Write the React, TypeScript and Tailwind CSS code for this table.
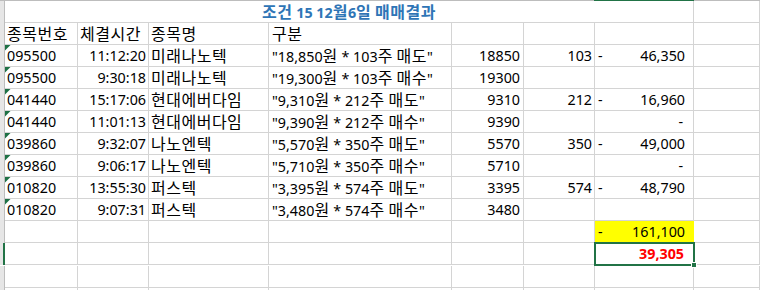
import type { ReactNode } from 'react';

type Row = {
  code: string;
  time: string;
  name: string;
  desc: string;
  price: string;
  qty: string;
  amount: string;
};

const rows: Row[] = [
  { code: '095500', time: '11:12:20', name: '미래나노텍', desc: '"18,850원 * 103주 매도"', price: '18850', qty: '103', amount: '46,350' },
  { code: '095500', time: '9:30:18', name: '미래나노텍', desc: '"19,300원 * 103주 매수"', price: '19300', qty: '', amount: '' },
  { code: '041440', time: '15:17:06', name: '현대에버다임', desc: '"9,310원 * 212주 매도"', price: '9310', qty: '212', amount: '16,960' },
  { code: '041440', time: '11:01:13', name: '현대에버다임', desc: '"9,390원 * 212주 매수"', price: '9390', qty: '', amount: '0' },
  { code: '039860', time: '9:32:07', name: '나노엔텍', desc: '"5,570원 * 350주 매도"', price: '5570', qty: '350', amount: '49,000' },
  { code: '039860', time: '9:06:17', name: '나노엔텍', desc: '"5,710원 * 350주 매수"', price: '5710', qty: '', amount: '0' },
  { code: '010820', time: '13:55:30', name: '퍼스텍', desc: '"3,395원 * 574주 매도"', price: '3395', qty: '574', amount: '48,790' },
  { code: '010820', time: '9:07:31', name: '퍼스텍', desc: '"3,480원 * 574주 매수"', price: '3480', qty: '', amount: '' },
];

const grid = 'grid grid-cols-[73px_71px_120px_183px_72px_71px_99px_1fr]';
const cell = 'relative h-[22px] border-r border-b border-[#d4d4d4] whitespace-nowrap overflow-visible leading-[20px] pt-[1px]';

// Malgun Gothic draws hangul a bit wider than its latin, so bump hangul runs
function Ko({ text }: { text: string }) {
  const parts = text.split(/([\uAC00-\uD7A3]+)/);
  return (
    <>
      {parts.map((p, i) =>
        /[\uAC00-\uD7A3]/.test(p) ? (
          <span key={i} className="text-[16px] tracking-[0.5px]">
            {p}
          </span>
        ) : (
          <span key={i}>{p}</span>
        )
      )}
    </>
  );
}

function RowHead({ selected = false }: { selected?: boolean }) {
  return (
    <div
      className={
        selected
          ? 'w-[5px] h-[22px] bg-[#e6e6e6] border-r-2 border-[#217346] shrink-0'
          : 'w-[5px] h-[22px] bg-[#e6e6e6] border-r border-[#bdbdbd] shrink-0'
      }
    />
  );
}

function TextFlag() {
  return (
    <svg className="absolute left-0 top-0" width="6" height="6" viewBox="0 0 6 6">
      <polygon points="0,0 5.5,0 0,5.5" fill="#1e7145" />
    </svg>
  );
}

function Line({ children, selected }: { children: ReactNode; selected?: boolean }) {
  return (
    <div className="flex">
      <RowHead selected={selected} />
      <div className={`${grid} flex-1`}>{children}</div>
    </div>
  );
}

function Accounting({ value }: { value: string }) {
  if (!value) return <div className={cell} />;
  if (value === '0') return <div className={`${cell} text-right pr-[10px]`}>-</div>;
  return (
    <div className={`${cell} flex justify-between pl-[3px] pr-[8px]`}>
      <span>-</span>
      <span>{value}</span>
    </div>
  );
}

export default function App() {
  return (
    <div
      className="w-[760px] h-[290px] overflow-hidden bg-white text-[#000] text-[14.3px]"
      style={{ fontFamily: '"Noto Sans", "Noto Sans CJK KR", sans-serif' }}
    >
      <div className="flex h-[1px]">
        <div className="w-[594px] bg-[#bdbdbd]" />
        <div className="w-[100px] bg-[#217346]" />
        <div className="flex-1 bg-[#bdbdbd]" />
      </div>

      <Line>
        <div className={`${cell} col-span-7 text-center font-bold text-[#2e75b6]`}>
          <Ko text="조건 15 12월6일 매매결과" />
        </div>
        <div className={cell} />
      </Line>

      <Line>
        <div className={`${cell} pl-[2px]`}>
          <Ko text="종목번호" />
        </div>
        <div className={`${cell} pl-[2px]`}>
          <Ko text="체결시간" />
        </div>
        <div className={`${cell} pl-[2px]`}>
          <Ko text="종목명" />
        </div>
        <div className={`${cell} pl-[3px]`}>
          <Ko text="구분" />
        </div>
        <div className={cell} />
        <div className={cell} />
        <div className={cell} />
        <div className={cell} />
      </Line>

      {rows.map((r, i) => (
        <Line key={i}>
          <div className={`${cell} pl-[2px]`}>
            <TextFlag />
            {r.code}
          </div>
          <div className={`${cell} text-right pr-[2px]`}>{r.time}</div>
          <div className={`${cell} pl-[2px]`}>
            <Ko text={r.name} />
          </div>
          <div className={`${cell} pl-[3px]`}>
            <Ko text={r.desc} />
          </div>
          <div className={`${cell} text-right pr-[3px]`}>{r.price}</div>
          <div className={`${cell} text-right pr-[2px]`}>{r.qty}</div>
          <Accounting value={r.amount} />
          <div className={cell} />
        </Line>
      ))}

      <Line>
        <div className={cell} />
        <div className={cell} />
        <div className={cell} />
        <div className={cell} />
        <div className={cell} />
        <div className={cell} />
        <div className="relative h-[22px] bg-[#ffff00] border-b border-r border-[#ffff00] flex justify-between pl-[3px] pr-[8px] leading-[20px] pt-[1px]">
          <span>-</span>
          <span>161,100</span>
        </div>
        <div className={cell} />
      </Line>

      <Line selected>
        <div className={cell} />
        <div className={cell} />
        <div className={cell} />
        <div className={cell} />
        <div className={cell} />
        <div className={cell} />
        <div className="relative -ml-[1px] -mt-[1px] h-[24px] w-[101px] border-2 border-[#217346] text-right pr-[9px] leading-[20px] font-bold text-[#ff0000] z-10">
          39,305
          <div className="absolute -right-[4px] -bottom-[4px] w-[6px] h-[6px] bg-[#217346] border border-white" />
        </div>
        <div className={cell} />
      </Line>

      {[0, 1].map((k) => (
        <Line key={k}>
          <div className={cell} />
          <div className={cell} />
          <div className={cell} />
          <div className={cell} />
          <div className={cell} />
          <div className={cell} />
          <div className={cell} />
          <div className={cell} />
        </Line>
      ))}
    </div>
  );
}
